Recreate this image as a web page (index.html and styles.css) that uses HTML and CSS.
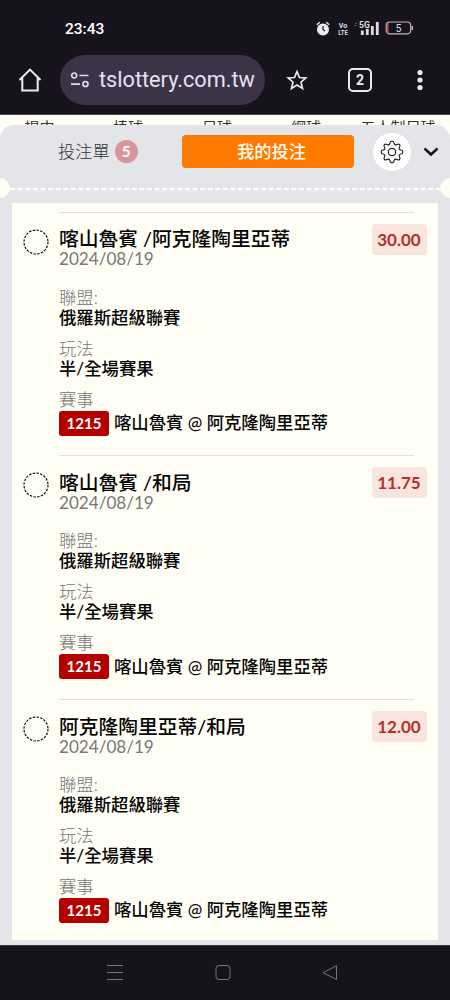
FILE: index.html
```html
<!DOCTYPE html>
<html lang="zh-Hant">
<head>
<meta charset="utf-8">
<title>我的投注</title>
<link rel="stylesheet" href="styles.css">
</head>
<body>
<div class="phone">
  <div class="status">
    <span class="clock">23:43</span>
    <div class="status-icons">
      <svg class="alarm" width="14" height="15" viewBox="0 0 14 15"><circle cx="7" cy="8.500" r="6" fill="#eee"/><path d="M.8 3.800 3.800 1.200M13.200 3.800 10.200 1.200" stroke="#eee" stroke-width="1.400"/><path d="M7 5v3.500l2 1.600" fill="none" stroke="#17131d" stroke-width="1.200"/></svg>
      <svg class="volte" width="14" height="18" viewBox="0 0 14 18"><text x="7" y="7" textLength="8.500" lengthAdjust="spacingAndGlyphs">Vo</text><text x="7" y="14" textLength="9.500" lengthAdjust="spacingAndGlyphs">LTE</text></svg>
      <svg class="signal" width="26" height="16" viewBox="0 0 26 16"><path d="M0 5.500h3M1 3.500h2" stroke="#555" stroke-width="1"/><path d="M8.300 15v-4.500M13.300 15V8.500M18.300 15V6M23.300 15V2" stroke="#ddd" stroke-width="2.800"/><text x="5" y="8" class="fiveg">5G</text></svg>
      <svg class="battery" width="29" height="14" viewBox="0 0 29 14"><rect x="1.200" y="1" width="24.500" height="11.800" rx="3.500" fill="none" stroke="#bbb" stroke-width="1.200"/><path d="M27.300 5v4" stroke="#bbb" stroke-width="1.500"/><path d="M2.800 2.500v9" stroke="#c8394a" stroke-width="1.800"/><text x="13.500" y="10.500" class="level">5</text></svg>
    </div>
  </div>
  <div class="toolbar">
    <svg class="home" width="24" height="24" viewBox="0 0 24 24"><path d="M1.500 12 12 1.600 22.500 12M4.300 10v12.400h15.400V10" fill="none" stroke="#eceaf0" stroke-width="2"/></svg>
    <div class="address">
      <svg width="20" height="18" viewBox="0 0 20 18"><g fill="none" stroke="#e4deec" stroke-width="1.700"><circle cx="4.200" cy="4.500" r="2.500"/><path d="M9.500 4.500h9M1 13.200h9"/><circle cx="15.500" cy="13" r="2.500"/></g></svg>
      <span class="url">tslottery.com.tw</span>
    </div>
    <svg class="star" width="22" height="22" viewBox="0 0 22 22"><path d="m11 2.600 2.500 5.900 6.300.5-4.800 4.200 1.500 6.200-5.500-3.300-5.500 3.300L7 13.200 2.200 9l6.300-.5z" fill="none" stroke="#eceaf0" stroke-width="1.700"/></svg>
    <span class="tabcount">2</span>
    <svg class="more" width="6" height="22" viewBox="0 0 6 22"><g fill="#eceaf0"><circle cx="3" cy="3.500" r="2.600"/><circle cx="3" cy="11" r="2.600"/><circle cx="3" cy="18.500" r="2.600"/></g></svg>
  </div>
  <nav class="sports"><span>場中</span><span>棒球</span><span>足球</span><span>網球</span><span class="wide">五人制足球</span></nav>
  <main class="sheet">
    <div class="tabs">
      <div class="slip">投注單<span class="count">5</span></div>
      <div class="mybets">我的投注</div>
      <div class="gear"><svg width="24" height="24" viewBox="0 0 24 24"><g fill="none" stroke="#222" stroke-width="1.200" stroke-linejoin="round"><circle cx="12" cy="12" r="3.700"/><path d="M10 3.200Q10.200 1.200 12 1.200T14 3.200Q14.200 4.600 15.400 4.900Q16.500 5 17.500 4.200Q18.800 3.800 19.500 4.500T19.800 6.500Q19 7.600 19.200 8.700Q19.600 9.800 20.800 10Q22.800 10.200 22.800 12T20.800 14Q19.600 14.200 19.200 15.300Q19 16.400 19.800 17.500Q20.200 18.800 19.500 19.500T17.500 19.800Q16.500 19 15.400 19.100Q14.200 19.500 14 20.800Q13.800 22.800 12 22.800T10 20.800Q9.800 19.500 8.600 19.100Q7.500 19 6.500 19.800Q5.200 20.200 4.500 19.500T4.200 17.500Q5 16.400 4.800 15.300Q4.400 14.200 3.200 14Q1.200 13.800 1.200 12T3.200 10Q4.400 9.800 4.800 8.700Q5 7.600 4.200 6.500Q3.800 5.200 4.500 4.500T6.500 4.200Q7.500 5 8.600 4.900Q9.800 4.500 10 3.200z"/></g></svg></div>
      <svg class="chev" width="16" height="10" viewBox="0 0 16 10"><path d="m1.500 1.500 6.500 6 6.500-6" fill="none" stroke="#111" stroke-width="2.400"/></svg>
    </div>
    <div class="perf"><i class="notch"></i><svg class="dashes" width="430" height="4"><path d="M0 2h430" stroke="#fffef5" stroke-width="2.600" stroke-dasharray="5.200 2.400"/></svg><i class="notch"></i></div>
    <div class="ticket">
      <article class="bet">
        <svg class="ring" width="26" height="26" viewBox="0 0 26 26"><circle cx="13" cy="13" r="12" fill="none" stroke="#111" stroke-width="1.200" stroke-dasharray="2.500 1.270"/></svg>
        <div class="detail">
          <h2>喀山魯賓 /阿克隆陶里亞蒂</h2><time>2024/08/19</time>
          <dl><dt>聯盟:</dt><dd>俄羅斯超級聯賽</dd><dt>玩法</dt><dd>半/全場賽果</dd><dt>賽事</dt><dd class="match"><span class="code">1215</span>喀山魯賓 @ 阿克隆陶里亞蒂</dd></dl>
        </div>
        <span class="odds">30.00</span>
      </article>
      <article class="bet">
        <svg class="ring" width="26" height="26" viewBox="0 0 26 26"><circle cx="13" cy="13" r="12" fill="none" stroke="#111" stroke-width="1.200" stroke-dasharray="2.500 1.270"/></svg>
        <div class="detail">
          <h2>喀山魯賓 /和局</h2><time>2024/08/19</time>
          <dl><dt>聯盟:</dt><dd>俄羅斯超級聯賽</dd><dt>玩法</dt><dd>半/全場賽果</dd><dt>賽事</dt><dd class="match"><span class="code">1215</span>喀山魯賓 @ 阿克隆陶里亞蒂</dd></dl>
        </div>
        <span class="odds">11.75</span>
      </article>
      <article class="bet">
        <svg class="ring" width="26" height="26" viewBox="0 0 26 26"><circle cx="13" cy="13" r="12" fill="none" stroke="#111" stroke-width="1.200" stroke-dasharray="2.500 1.270"/></svg>
        <div class="detail">
          <h2>阿克隆陶里亞蒂/和局</h2><time>2024/08/19</time>
          <dl><dt>聯盟:</dt><dd>俄羅斯超級聯賽</dd><dt>玩法</dt><dd>半/全場賽果</dd><dt>賽事</dt><dd class="match"><span class="code">1215</span>喀山魯賓 @ 阿克隆陶里亞蒂</dd></dl>
        </div>
        <span class="odds">12.00</span>
      </article>
    </div>
  </main>
  <footer class="navbar">
    <svg width="16" height="16" viewBox="0 0 16 16"><path d="M0 .5h16M0 7.500h16M0 14.500h16" stroke="#77747c" stroke-width="1"/></svg>
    <svg width="16" height="16" viewBox="0 0 16 16"><rect x="1" y=".5" width="14" height="14" rx="3" fill="none" stroke="#77747c"/></svg>
    <svg width="16" height="16" viewBox="0 0 16 16"><path d="M14.500 .8v13.600L1 7.600z" fill="none" stroke="#77747c" stroke-linejoin="round"/></svg>
  </footer>
</div>
</body>
</html>
```
FILE: styles.css
```css
* { box-sizing: border-box; }
body { margin: 0; background: #fffef5; font-family: Lato, "Noto Sans CJK TC", sans-serif; }
svg { display: block; flex: none; }
.phone { width: 450px; height: 1000px; overflow: hidden; display: flex; flex-direction: column; }
.phone > * { flex: none; }

.status { height: 50px; background: #17131d; display: flex; justify-content: space-between; padding: 20px 36px 0 65px; color: #fff; }
.clock { font: 500 15.5px/18px Roboto, sans-serif; }
.status-icons { display: flex; }
.alarm { margin: 1px 6px 0 0; }
.volte { margin: 1px 4px 0 0; font: 700 7.8px Roboto, sans-serif; fill: #ddd; text-anchor: middle; }
.signal { margin: 0 5px 0 0; }
.fiveg { font: 700 8.5px Roboto, sans-serif; fill: #ddd; stroke: #17131d; stroke-width: 1.5px; paint-order: stroke; }
.battery { margin-top: 1px; }
.level { font: 10.5px Roboto, sans-serif; fill: #ddd; text-anchor: middle; }

.toolbar { height: 65px; background: #17131d; border-bottom: 1px solid #4a4650; display: flex; align-items: center; padding: 0 27px 5px 18px; }
.toolbar > * { flex: none; }
.address { width: 205px; height: 50px; margin: 0 21px 0 18px; border-radius: 25px; background: #3b3447; display: flex; align-items: center; padding-left: 10px; }
.url { margin-left: 9px; font: 21.7px/30px Roboto, sans-serif; color: #e8e1f0; white-space: nowrap; }
.tabcount { width: 24px; height: 24px; margin: 0 45px 0 40px; border: 2px solid #eceaf0; border-radius: 5px; color: #eceaf0; font: 700 14px/20px Roboto, sans-serif; text-align: center; }

.sports { height: 24px; margin-bottom: -14px; padding: 3px 0 0; display: grid; grid-template-columns: 79px 98px 80px 98px 86px; text-align: center; font-size: 15px; line-height: 18px; color: #333; }
.sheet { position: relative; height: 820px; background: #e4e5e8; border-radius: 14px 14px 0 0; }
.tabs { height: 53px; display: flex; align-items: center; padding-left: 58px; }
.slip { width: 124px; display: flex; align-items: center; font-size: 17.2px; font-weight: 300; line-height: 24px; color: #333; }
.count { width: 23px; height: 23px; margin-left: 5px; border-radius: 50%; background: #d99698; color: #fff; font-size: 15px; font-weight: 700; line-height: 23px; text-align: center; }
.mybets { width: 172px; height: 33px; padding-left: 7px; border-radius: 4px; background: #ff7b00; color: #fffef5; font-size: 17.3px; font-weight: 500; line-height: 33px; text-align: center; }
.gear { width: 38px; height: 38px; margin: 0 12px 0 19px; border-radius: 50%; background: #fff; display: grid; place-items: center; }

.perf { height: 20px; margin: 0 -10px; display: flex; align-items: center; justify-content: space-between; overflow: hidden; }
.notch { width: 20px; height: 20px; border-radius: 50%; background: #fffef5; }
.dashes { margin-top: 1px; }
.ticket { height: 737px; margin: 4.5px 12px 0; padding: 9.3px 11px 0; background: #fffef5; overflow: hidden; }
.bet { height: 243.6px; display: flex; }
.ring { margin-top: 17px; }
.detail { width: 355px; margin-left: 10px; border-top: 1px solid #e5e1de; padding-top: 13.6px; white-space: nowrap; color: #050505; }
.detail h2 { margin: 0; font-size: 19.8px; font-weight: 500; line-height: 24px; letter-spacing: -.03px; }
.detail time { display: block; font-size: 17.1px; line-height: 18px; color: #777; }
.detail dl { margin: 19.4px 0 0; font-size: 17.35px; line-height: 20px; }
.detail dt { font-weight: 300; color: #777; }
.detail dd { margin: 0 0 11px; font-weight: 500; }
.detail .match { display: flex; align-items: center; height: 25px; margin: 1px 0 0; }
.code { width: 50px; height: 25px; margin-right: 5px; border-radius: 3px; background: #b60000; color: #fff; font-size: 15px; font-weight: 700; line-height: 25px; text-align: center; }
.odds { width: 55px; height: 31px; margin: 12px 0 0 -42.5px; flex: none; border-radius: 4px; background: #f8e5de; color: #b5302b; font-size: 17px; font-weight: 700; line-height: 31px; text-align: center; }

.navbar { height: 55px; background: #17131d; border-top: 1px solid #3c3a40; display: flex; gap: 91.5px; padding: 19px 0 0 107px; }
```
